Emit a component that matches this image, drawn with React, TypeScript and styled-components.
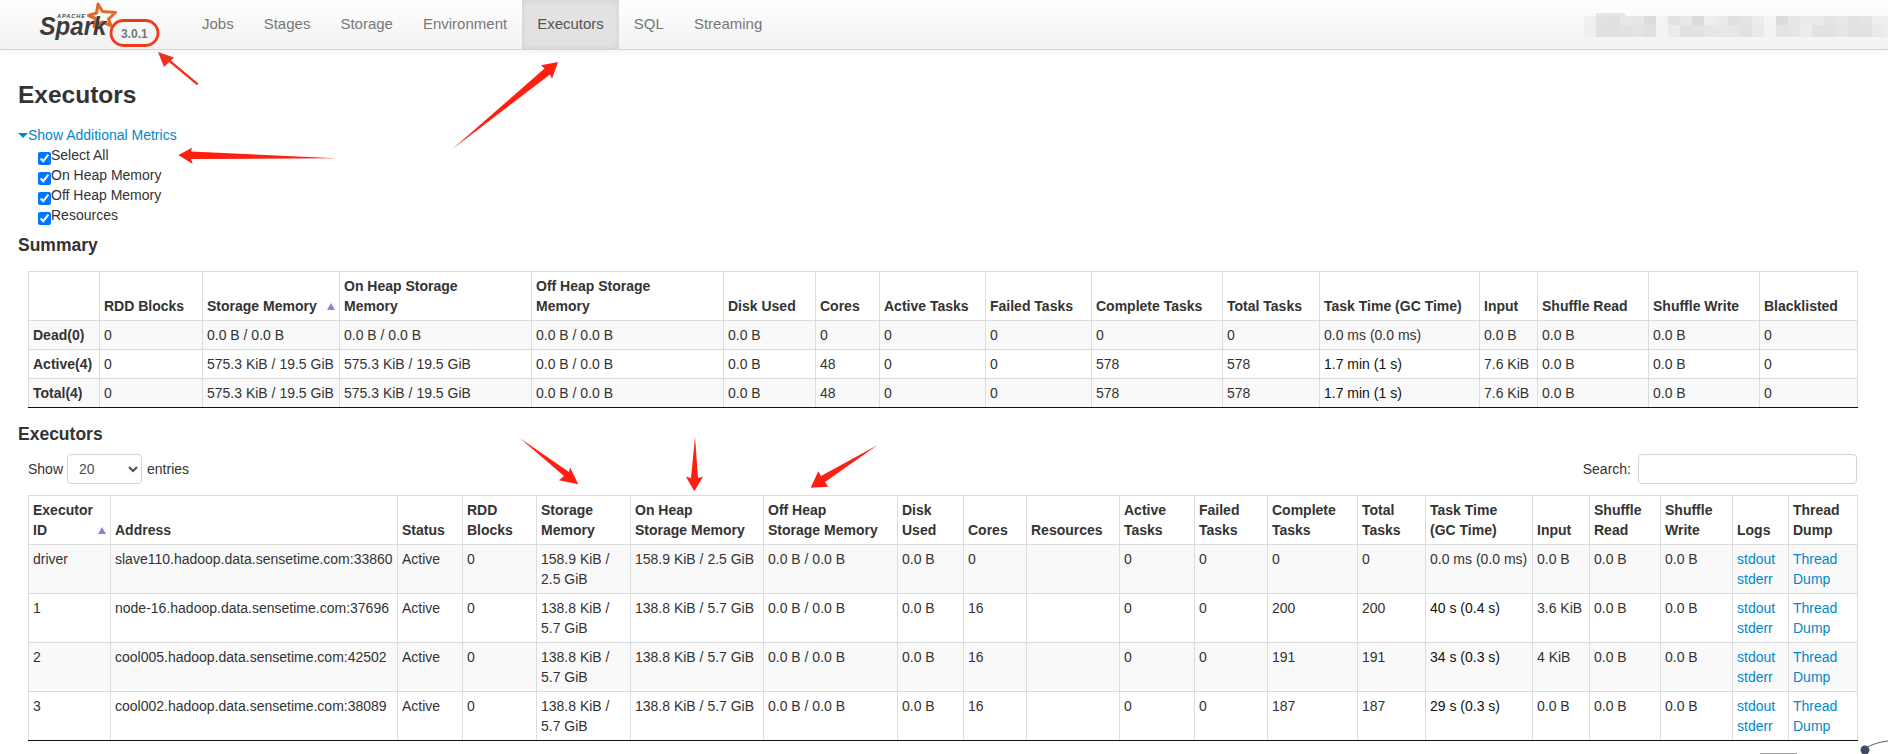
import React, { FC } from 'react';
import styled, { createGlobalStyle } from 'styled-components';

const GlobalStyle = createGlobalStyle`
  html, body {
    margin: 0;
    padding: 0;
    height: 754px;
    overflow: hidden;
    background: #fff;
  }
  body {
    font-family: "Liberation Sans", Arial, sans-serif;
    font-size: 14px;
    line-height: 20px;
    color: #333;
  }
`;

const Page = styled.div`
  position: relative;
  width: 1888px;
  height: 754px;
  overflow: hidden;
`;

// navbar
const NavBar = styled.nav`
  display: flex;
  height: 49px;
  background: linear-gradient(to bottom, #ffffff, #f2f2f2);
  border-bottom: 1px solid #d4d4d4;
  box-shadow: 0 1px 8px rgba(0, 0, 0, 0.065);
`;

const Brand = styled.div`
  display: flex;
  width: 187px;
  padding-left: 38px;
  box-sizing: border-box;
`;

const LogoSvg = styled.svg`
  flex: none;
  width: 82px;
  height: 49px;
`;

const Version = styled.span`
  margin: 24px 0 0 1px;
  font-size: 12px;
  line-height: 20px;
  font-weight: bold;
  color: #777;
`;

const NavItem = styled.a<{ $active?: boolean }>`
  padding: 0 15px;
  font-size: 15px;
  line-height: 47px;
  color: ${(props) => (props.$active ? '#555' : '#777')};
  background: ${(props) => (props.$active ? '#e2e2e2' : 'transparent')};
  box-shadow: ${(props) =>
    props.$active ? 'inset 0 0 6px rgba(0, 0, 0, 0.09)' : 'none'};
`;

const Mosaic = styled.div`
  position: relative;
  display: grid;
  grid-template-columns: repeat(26, 12px);
  grid-template-rows: 9px 12px;
  align-self: flex-start;
  margin: 16px 0 0 auto;
  width: 304px;
  overflow: visible;

  &::before {
    content: '';
    position: absolute;
    top: -3px;
    left: 12px;
    width: 30px;
    height: 3px;
    background: #e6e6e6;
    border-radius: 0 8px 0 0;
  }
`;

const MosaicCell = styled.i<{ $shade: string }>`
  background: ${(props) => props.$shade};
`;

// content
const Content = styled.main`
  padding: 30px 0 0 18px;
`;

const Title = styled.h3`
  margin: 0 0 16px;
  font-size: 24.5px;
  line-height: 29px;
  font-weight: bold;
`;

const MetricsToggle = styled.a`
  display: block;
  color: #0088cc;
`;

const Caret = styled.span`
  display: inline-block;
  margin: 0 0 2px;
  border-top: 5px solid #0088cc;
  border-left: 5px solid transparent;
  border-right: 5px solid transparent;
`;

const MetricList = styled.div`
  padding-left: 20px;
`;

const MetricLabel = styled.label`
  display: block;
  height: 20px;
`;

const MetricCheck = styled.input`
  width: 13px;
  height: 13px;
  margin: 0;
  vertical-align: -5px;
`;

const SectionTitle = styled.h4<{ $top: number }>`
  margin: ${(props) => props.$top}px 0 0;
  font-size: 17.5px;
  line-height: 21px;
  font-weight: bold;
`;

const TableBlock = styled.div`
  margin-left: 10px;
  width: 1829px;
`;

const Grid = styled.table<{ $top: number }>`
  width: 1829px;
  margin-top: ${(props) => props.$top}px;
  table-layout: fixed;
  border-collapse: collapse;
  border-bottom: 1px solid #111;
  color: #333;
`;

const HeadCell = styled.th<{ $sorted?: boolean }>`
  position: relative;
  padding: 4px;
  border: 1px solid #dcdcdc;
  text-align: left;
  vertical-align: bottom;
  font-weight: bold;
  white-space: pre-line;

  &::after {
    content: '';
    display: ${(props) => (props.$sorted ? 'block' : 'none')};
    position: absolute;
    right: 4px;
    bottom: 10px;
    border-bottom: 7px solid #8585dc;
    border-left: 4.5px solid transparent;
    border-right: 4.5px solid transparent;
  }
`;

const BodyRow = styled.tr<{ $striped: boolean }>`
  background: ${(props) => (props.$striped ? '#f9f9f9' : '#fff')};
`;

const BodyCell = styled.td<{ $bold?: boolean; $dark?: boolean }>`
  padding: 4px;
  border: 1px solid #dcdcdc;
  vertical-align: top;
  font-weight: ${(props) => (props.$bold ? 'bold' : 'normal')};
  color: ${(props) => (props.$dark ? '#111' : 'inherit')};

  tr:last-child > & {
    border-bottom-color: #111;
  }
`;

const CellLink = styled.a`
  display: block;
  color: #0088cc;
`;

const TableControls = styled.div`
  display: flex;
  align-items: center;
  justify-content: space-between;
  margin-top: 9px;
`;

const ControlLabel = styled.label`
  display: flex;
  align-items: center;
`;

const EntriesSelect = styled.select`
  width: 75px;
  height: 30px;
  margin: 0 5px 0 4px;
  padding: 0 7px;
  background: #fff;
  border: 1px solid #ced4da;
  border-radius: 4px;
  color: #495057;
  font-family: inherit;
  font-size: 14px;
`;

const SearchInput = styled.input`
  width: 219px;
  height: 30px;
  margin-left: 7px;
  padding: 0 8px;
  box-sizing: border-box;
  border: 1px solid #ced4da;
  border-radius: 4px;
`;

// drawn over the page: the red marks somebody put on the screenshot
const Marks = styled.svg`
  position: absolute;
  top: 0;
  left: 0;
  pointer-events: none;
`;

const shadesTop = ['f0', 'e2', 'e0', 'e8', 'e6', 'dc', 'f4', 'e2', 'e8', 'dc', 'ee', 'ea', 'e0', 'e4', 'ec', 'f4', 'dc', 'e6', 'ea', 'ea', 'e4', 'e8', 'e2', 'e4', 'ee', 'ee'];
const shadesBottom = ['ef', 'e0', 'e0', 'e2', 'e4', 'e0', 'f3', 'eb', 'e2', 'e2', 'e6', 'e8', 'e8', 'e2', 'ea', 'f3', 'e4', 'e6', 'ec', 'e2', 'e2', 'e6', 'e2', 'e2', 'ea', 'ee'];

const navItems = ['Jobs', 'Stages', 'Storage', 'Environment', 'Executors', 'SQL', 'Streaming'];
const metricItems = ['Select All', 'On Heap Memory', 'Off Heap Memory', 'Resources'];

const summaryWidths = [71, 103, 137, 192, 192, 92, 64, 106, 106, 131, 97, 160, 58, 111, 111, 98];
const summaryHead = [
  '', 'RDD Blocks', 'Storage Memory', 'On Heap Storage\nMemory', 'Off Heap Storage\nMemory', 'Disk Used', 'Cores',
  'Active Tasks', 'Failed Tasks', 'Complete Tasks', 'Total Tasks', 'Task Time (GC Time)', 'Input',
  'Shuffle Read', 'Shuffle Write', 'Blacklisted',
];
const summaryRows = [
  ['Dead(0)', '0', '0.0 B / 0.0 B', '0.0 B / 0.0 B', '0.0 B / 0.0 B', '0.0 B', '0', '0', '0', '0', '0', '0.0 ms (0.0 ms)', '0.0 B', '0.0 B', '0.0 B', '0'],
  ['Active(4)', '0', '575.3 KiB / 19.5 GiB', '575.3 KiB / 19.5 GiB', '0.0 B / 0.0 B', '0.0 B', '48', '0', '0', '578', '578', '1.7 min (1 s)', '7.6 KiB', '0.0 B', '0.0 B', '0'],
  ['Total(4)', '0', '575.3 KiB / 19.5 GiB', '575.3 KiB / 19.5 GiB', '0.0 B / 0.0 B', '0.0 B', '48', '0', '0', '578', '578', '1.7 min (1 s)', '7.6 KiB', '0.0 B', '0.0 B', '0'],
];

const executorWidths = [82, 287, 65, 74, 94, 133, 134, 66, 63, 93, 75, 73, 90, 68, 107, 57, 71, 72, 56, 69];
const executorHead = [
  'Executor\nID', 'Address', 'Status', 'RDD\nBlocks', 'Storage\nMemory', 'On Heap\nStorage Memory',
  'Off Heap\nStorage Memory', 'Disk\nUsed', 'Cores', 'Resources', 'Active\nTasks', 'Failed\nTasks',
  'Complete\nTasks', 'Total\nTasks', 'Task Time\n(GC Time)', 'Input', 'Shuffle\nRead', 'Shuffle\nWrite',
  'Logs', 'Thread\nDump',
];
const executorRows = [
  ['driver', 'slave110.hadoop.data.sensetime.com:33860', 'Active', '0', '158.9 KiB / 2.5 GiB', '158.9 KiB / 2.5 GiB', '0.0 B / 0.0 B', '0.0 B', '0', '', '0', '0', '0', '0', '0.0 ms (0.0 ms)', '0.0 B', '0.0 B', '0.0 B'],
  ['1', 'node-16.hadoop.data.sensetime.com:37696', 'Active', '0', '138.8 KiB / 5.7 GiB', '138.8 KiB / 5.7 GiB', '0.0 B / 0.0 B', '0.0 B', '16', '', '0', '0', '200', '200', '40 s (0.4 s)', '3.6 KiB', '0.0 B', '0.0 B'],
  ['2', 'cool005.hadoop.data.sensetime.com:42502', 'Active', '0', '138.8 KiB / 5.7 GiB', '138.8 KiB / 5.7 GiB', '0.0 B / 0.0 B', '0.0 B', '16', '', '0', '0', '191', '191', '34 s (0.3 s)', '4 KiB', '0.0 B', '0.0 B'],
  ['3', 'cool002.hadoop.data.sensetime.com:38089', 'Active', '0', '138.8 KiB / 5.7 GiB', '138.8 KiB / 5.7 GiB', '0.0 B / 0.0 B', '0.0 B', '16', '', '0', '0', '187', '187', '29 s (0.3 s)', '0.0 B', '0.0 B', '0.0 B'],
];

const TASK_TIME_SUMMARY = 11;
const TASK_TIME_EXECUTOR = 14;

const SparkLogo: FC = () => (
  <LogoSvg viewBox="38 0 82 49">
    <polygon
      points="98,4 102.5,11.5 115.5,12.5 108.5,19 111,25.5 102,22 94,26.5 95.5,18.5 88.5,15.5 96.5,13"
      fill="none"
      stroke="#e0692a"
      strokeWidth="3"
      strokeLinejoin="round"
    />
    <text x="57" y="18" fontFamily="Liberation Sans" fontSize="5.5" fontWeight="bold" fontStyle="italic" fill="#444" textLength="28">
      APACHE
    </text>
    <text x="39.5" y="35" fontFamily="Liberation Sans" fontSize="25" fontWeight="bold" fontStyle="italic" fill="#3d3b3c" textLength="67" lengthAdjust="spacingAndGlyphs">
      Spark
    </text>
  </LogoSvg>
);

const App: FC = () => (
  <Page>
    <GlobalStyle />
    <NavBar>
      <Brand>
        <SparkLogo />
        <Version>3.0.1</Version>
      </Brand>
      {navItems.map((item) => (
        <NavItem key={item} $active={item === 'Executors'}>
          {item}
        </NavItem>
      ))}
      <Mosaic>
        {shadesTop.map((shade, i) => (
          <MosaicCell key={`t${i}`} $shade={`#${shade}${shade}${shade}`} />
        ))}
        {shadesBottom.map((shade, i) => (
          <MosaicCell key={`b${i}`} $shade={`#${shade}${shade}${shade}`} />
        ))}
      </Mosaic>
    </NavBar>

    <Content>
      <Title>Executors</Title>
      <MetricsToggle>
        <Caret />
        Show Additional Metrics
      </MetricsToggle>
      <MetricList>
        {metricItems.map((item) => (
          <MetricLabel key={item}>
            <MetricCheck type="checkbox" defaultChecked />
            {item}
          </MetricLabel>
        ))}
      </MetricList>

      <SectionTitle $top={10}>Summary</SectionTitle>
      <TableBlock>
        <Grid $top={15}>
          <colgroup>
            {summaryWidths.map((w, i) => (
              <col key={i} width={w} />
            ))}
          </colgroup>
          <thead>
            <tr>
              {summaryHead.map((head, i) => (
                <HeadCell key={i} $sorted={i === 2}>
                  {head}
                </HeadCell>
              ))}
            </tr>
          </thead>
          <tbody>
            {summaryRows.map((row, r) => (
              <BodyRow key={r} $striped={r % 2 === 0}>
                {row.map((cell, i) => (
                  <BodyCell key={i} $bold={i === 0} $dark={r > 0 && i === TASK_TIME_SUMMARY}>
                    {cell}
                  </BodyCell>
                ))}
              </BodyRow>
            ))}
          </tbody>
        </Grid>
      </TableBlock>

      <SectionTitle $top={16}>Executors</SectionTitle>
      <TableBlock>
        <TableControls>
          <ControlLabel>
            Show
            <EntriesSelect defaultValue="20">
              <option value="20">20</option>
              <option value="40">40</option>
              <option value="60">60</option>
              <option value="100">100</option>
            </EntriesSelect>
            entries
          </ControlLabel>
          <ControlLabel>
            Search:
            <SearchInput type="search" />
          </ControlLabel>
        </TableControls>
        <Grid $top={11}>
          <colgroup>
            {executorWidths.map((w, i) => (
              <col key={i} width={w} />
            ))}
          </colgroup>
          <thead>
            <tr>
              {executorHead.map((head, i) => (
                <HeadCell key={i} $sorted={i === 0}>
                  {head}
                </HeadCell>
              ))}
            </tr>
          </thead>
          <tbody>
            {executorRows.map((row, r) => (
              <BodyRow key={r} $striped={r % 2 === 0}>
                {row.map((cell, i) => (
                  <BodyCell key={i} $dark={r > 0 && i === TASK_TIME_EXECUTOR}>
                    {cell}
                  </BodyCell>
                ))}
                <BodyCell>
                  <CellLink>stdout</CellLink>
                  <CellLink>stderr</CellLink>
                </BodyCell>
                <BodyCell>
                  <CellLink>Thread Dump</CellLink>
                </BodyCell>
              </BodyRow>
            ))}
          </tbody>
        </Grid>
      </TableBlock>
    </Content>

    <Marks width="1888" height="754" viewBox="0 0 1888 754">
      <rect x="111" y="20.5" width="47" height="25" rx="12.5" fill="none" stroke="#f2391c" strokeWidth="2.8" />
      <line x1="197.7" y1="84.3" x2="166" y2="58" stroke="#f0331e" strokeWidth="2.4" />
      <polygon points="158,52 174,57.5 164,67" fill="#f0331e" />
      <g fill="#ff1f10">
        <polygon points="452.5,149 544.5,68.5 541,65.3 558,62 552,78.7 550,74.5" />
        <polygon points="335.5,158.3 191,151.5 192,147.7 178.4,155 192.7,164 191,159" />
        <polygon points="520,438.3 564,476 559,480.3 578.3,484.3 570,467.3 569,472" />
        <polygon points="695,436.7 691,478 686,476.7 694.3,491.3 703,476.7 698,478" />
        <polygon points="877.7,445 821,476 818.3,471.3 810.7,487.7 828.3,486.7 825,482" />
      </g>
      <rect x="1760" y="753" width="37" height="1" fill="#999" />
      <circle cx="1865" cy="750" r="4.5" fill="#3f4a63" />
      <path d="M1866 748 C1872 744 1880 742 1888 741" fill="none" stroke="#56607a" strokeWidth="1" />
    </Marks>
  </Page>
);

export default App;
